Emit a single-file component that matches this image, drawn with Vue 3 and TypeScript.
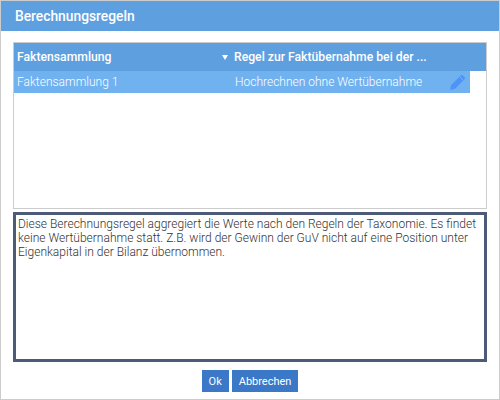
<script setup lang="ts">
const columns = ['Faktensammlung', 'Regel zur Faktübernahme bei der ...']
const row = { name: 'Faktensammlung 1', rule: 'Hochrechnen ohne Wertübernahme' }
const description =
  'Diese Berechnungsregel aggregiert die Werte nach den Regeln der Taxonomie. Es findet keine Wertübernahme statt. Z.B. wird der Gewinn der GuV nicht auf eine Position unter Eigenkapital in der Bilanz übernommen.'
</script>

<template>
  <div class="dialog">
    <div class="title">Berechnungsregeln</div>
    <div class="content">
      <div class="grid">
        <div class="grid-head">
          <div class="col-a">
            <span>{{ columns[0] }}</span>
            <span class="sort"></span>
          </div>
          <div class="col-b">{{ columns[1] }}</div>
        </div>
        <div class="grid-row">
          <div class="col-a">{{ row.name }}</div>
          <div class="col-b">{{ row.rule }}</div>
          <svg class="pencil" width="18" height="18" viewBox="0 0 18 18">
            <path d="M1 17l1.2-5L12 2.2a1 1 0 0 1 1.4 0l2.4 2.4a1 1 0 0 1 0 1.4L6 15.8z" fill="#4d94f5" />
            <path d="M10.6 3.6l3.8 3.8" stroke="#74b1f0" stroke-width="1" />
          </svg>
        </div>
      </div>
      <div class="description">{{ description }}</div>
    </div>
    <div class="actions">
      <button class="btn">Ok</button>
      <button class="btn">Abbrechen</button>
    </div>
  </div>
</template>

<style scoped>
.dialog {
  width: 500px;
  height: 400px;
  box-sizing: border-box;
  border: 1px solid #ccc;
  display: flex;
  flex-direction: column;
  background: #fff;
  font-family: Roboto, sans-serif;
  font-size: 12px;
  font-weight: 300;
}
.title {
  height: 30px;
  line-height: 30px;
  padding-left: 14px;
  flex: none;
  background: #5ea0df;
  color: #fff;
  font-size: 13.8px;
  font-weight: 500;
}
.content {
  padding: 11px 12px 0;
}
.grid {
  height: 167px;
  box-sizing: border-box;
  border: 1px solid #ccc;
}
.grid-head,
.grid-row {
  display: flex;
  align-items: center;
  color: #fff;
}
.grid-head {
  height: 28px;
  background: #5ea0df;
  font-weight: 500;
  font-size: 12.2px;
}
.grid-row {
  height: 22px;
  width: 456px;
  background: #70b1f0;
  position: relative;
}
.grid-row .col-b {
  padding-left: 4px;
}
.col-a {
  width: 217px;
  padding-left: 3px;
  padding-right: 3px;
  box-sizing: border-box;
  display: flex;
  justify-content: space-between;
  align-items: center;
}
.col-b {
  padding-left: 3px;
}
.sort {
  width: 0;
  height: 0;
  border-left: 3px solid transparent;
  border-right: 3px solid transparent;
  border-top: 5px solid #fff;
}
.pencil {
  position: absolute;
  right: 3px;
  top: 2px;
}
.description {
  height: 150px;
  box-sizing: border-box;
  margin-top: 3px;
  padding: 2px;
  border: 3px solid #4d5b78;
  color: #333;
  line-height: 14px;
}
.actions {
  display: flex;
  justify-content: center;
  gap: 3px;
  padding-top: 8px;
}
.btn {
  height: 22px;
  padding: 0 7px;
  border: none;
  background: #3b78c8;
  color: #fff;
  font-family: Roboto, sans-serif;
  font-size: 11px;
  font-weight: 400;
}
</style>
